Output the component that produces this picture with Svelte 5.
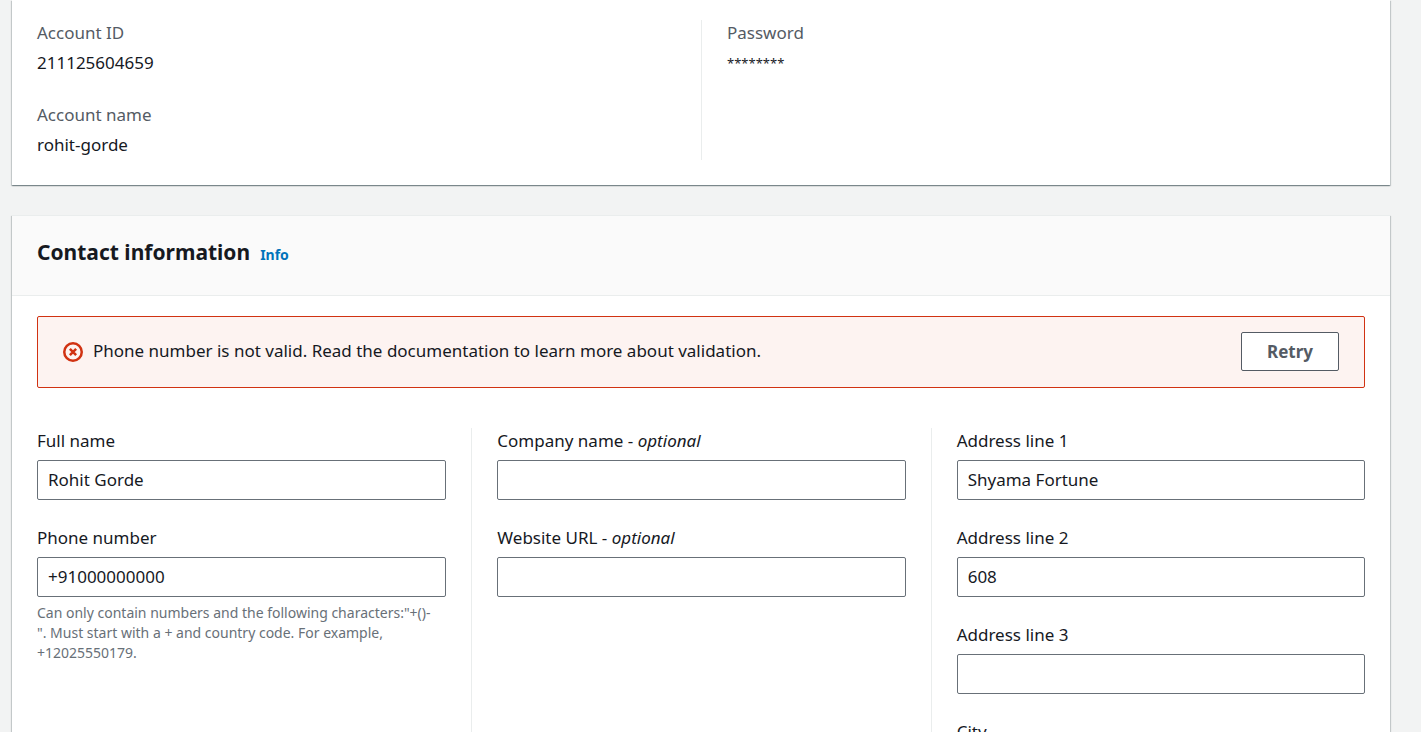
<script>
  const accountDetails = [
    [
      { label: 'Account ID', value: '211125604659' },
      { label: 'Account name', value: 'rohit-gorde' }
    ],
    [{ label: 'Password', value: '********', masked: true }]
  ];

  let contactColumns = $state([
    [
      { id: 'full-name', label: 'Full name', value: 'Rohit Gorde' },
      {
        id: 'phone',
        label: 'Phone number',
        value: '+91000000000',
        hint: 'Can only contain numbers and the following characters:"+()-\n". Must start with a + and country code. For example, +12025550179.'
      }
    ],
    [
      { id: 'company', label: 'Company name', optional: true, value: '' },
      { id: 'website', label: 'Website URL', optional: true, value: '' }
    ],
    [
      { id: 'address-1', label: 'Address line 1', value: 'Shyama Fortune' },
      { id: 'address-2', label: 'Address line 2', value: '608' },
      { id: 'address-3', label: 'Address line 3', value: '' },
      { id: 'city', label: 'City', value: '' }
    ]
  ]);
</script>

<main class="page">
  <section class="card account">
    <div class="columns two">
      {#each accountDetails as column}
        <dl class="column">
          {#each column as item}
            <div class="detail">
              <dt>{item.label}</dt>
              <dd class:masked={item.masked}>{item.value}</dd>
            </div>
          {/each}
        </dl>
      {/each}
    </div>
  </section>

  <section class="card contact">
    <header class="card-header">
      <h2>Contact information</h2>
      <a href="#info">Info</a>
    </header>

    <div class="alert" role="alert">
      <svg class="alert-icon" viewBox="0 0 16 16" aria-hidden="true">
        <circle cx="8" cy="8" r="7" />
        <path d="M5.5 5.5l5 5M10.5 5.5l-5 5" />
      </svg>
      <p>Phone number is not valid. Read the documentation to learn more about validation.</p>
      <button type="button">Retry</button>
    </div>

    <form class="columns three">
      {#each contactColumns as column}
        <div class="column">
          {#each column as field}
            <div class="field">
              <label for={field.id}>{field.label}{#if field.optional}{' - '}<i>optional</i>{/if}</label>
              <input id={field.id} type="text" bind:value={field.value} aria-describedby={field.hint ? `${field.id}-hint` : undefined} />
              {#if field.hint}
                <p class="hint" id={`${field.id}-hint`}>{field.hint}</p>
              {/if}
            </div>
          {/each}
        </div>
      {/each}
    </form>
  </section>
</main>

<style>
  :global(body) {
    background: #f2f3f3;
  }

  .page {
    box-sizing: border-box;
    height: 100vh;
    overflow: hidden;
    padding: 0 31px 0 12px;
    color: #16191f;
    font: 17px/26px 'Noto Sans', 'Open Sans', sans-serif;
  }

  .card {
    background: #fff;
    box-shadow:
      0 1px 1px 0 rgba(0, 28, 36, 0.3),
      1px 1px 1px 0 rgba(0, 28, 36, 0.15),
      -1px 1px 1px 0 rgba(0, 28, 36, 0.15);
  }

  .account {
    padding: 20px 0 25px;
  }

  .contact {
    margin-top: 30px;
    border-top: 1px solid #eaeded;
    padding-bottom: 25px;
  }

  .columns {
    display: grid;
  }

  .two {
    grid-template-columns: repeat(2, minmax(0, 1fr));
  }

  .three {
    grid-template-columns: repeat(3, minmax(0, 1fr));
  }

  .column {
    display: flex;
    flex-direction: column;
    margin: 0;
    padding: 0 25px;
  }

  .column + .column {
    border-left: 1px solid #eaeded;
  }

  dl.column {
    gap: 26px;
    padding-bottom: 2px;
  }

  form .column {
    gap: 25px;
  }

  dt {
    color: #545b64;
  }

  dd {
    margin: 4px 0 0;
  }

  .masked {
    font-size: 13px;
  }

  .card-header {
    display: flex;
    align-items: baseline;
    gap: 10px;
    padding: 20px 25px 27px;
    border-bottom: 1px solid #eaeded;
    background: #fafafa;
  }

  h2 {
    margin: 0;
    font-size: 21px;
    line-height: 32px;
    font-weight: 700;
  }

  a {
    color: #0073bb;
    font-size: 14px;
    line-height: 20px;
    font-weight: 700;
    text-decoration: none;
  }

  .alert {
    display: flex;
    align-items: center;
    gap: 10px;
    margin: 20px 25px 40px;
    padding: 15px 25px 16px;
    border: 1px solid #d13212;
    border-radius: 2px;
    background: #fdf3f1;
  }

  .alert p {
    flex: 1;
    margin: 0;
    padding-bottom: 1px;
  }

  .alert-icon {
    width: 20px;
    height: 20px;
    fill: none;
    stroke: #d13212;
    stroke-width: 2;
  }

  button {
    box-sizing: border-box;
    height: 39px;
    padding: 0 25px;
    border: 1px solid #545b64;
    border-radius: 2px;
    background: #fff;
    color: #545b64;
    font: inherit;
    font-weight: 700;
  }

  label {
    display: block;
    margin-bottom: 6px;
  }

  input {
    display: block;
    box-sizing: border-box;
    width: 100%;
    height: 40px;
    padding: 0 10px 2px;
    border: 1px solid #687078;
    border-radius: 2px;
    background: #fff;
    color: inherit;
    font: inherit;
  }

  .hint {
    margin: 6px 0 0;
    color: #687078;
    font-size: 14px;
    line-height: 20px;
    white-space: pre-line;
  }
</style>
